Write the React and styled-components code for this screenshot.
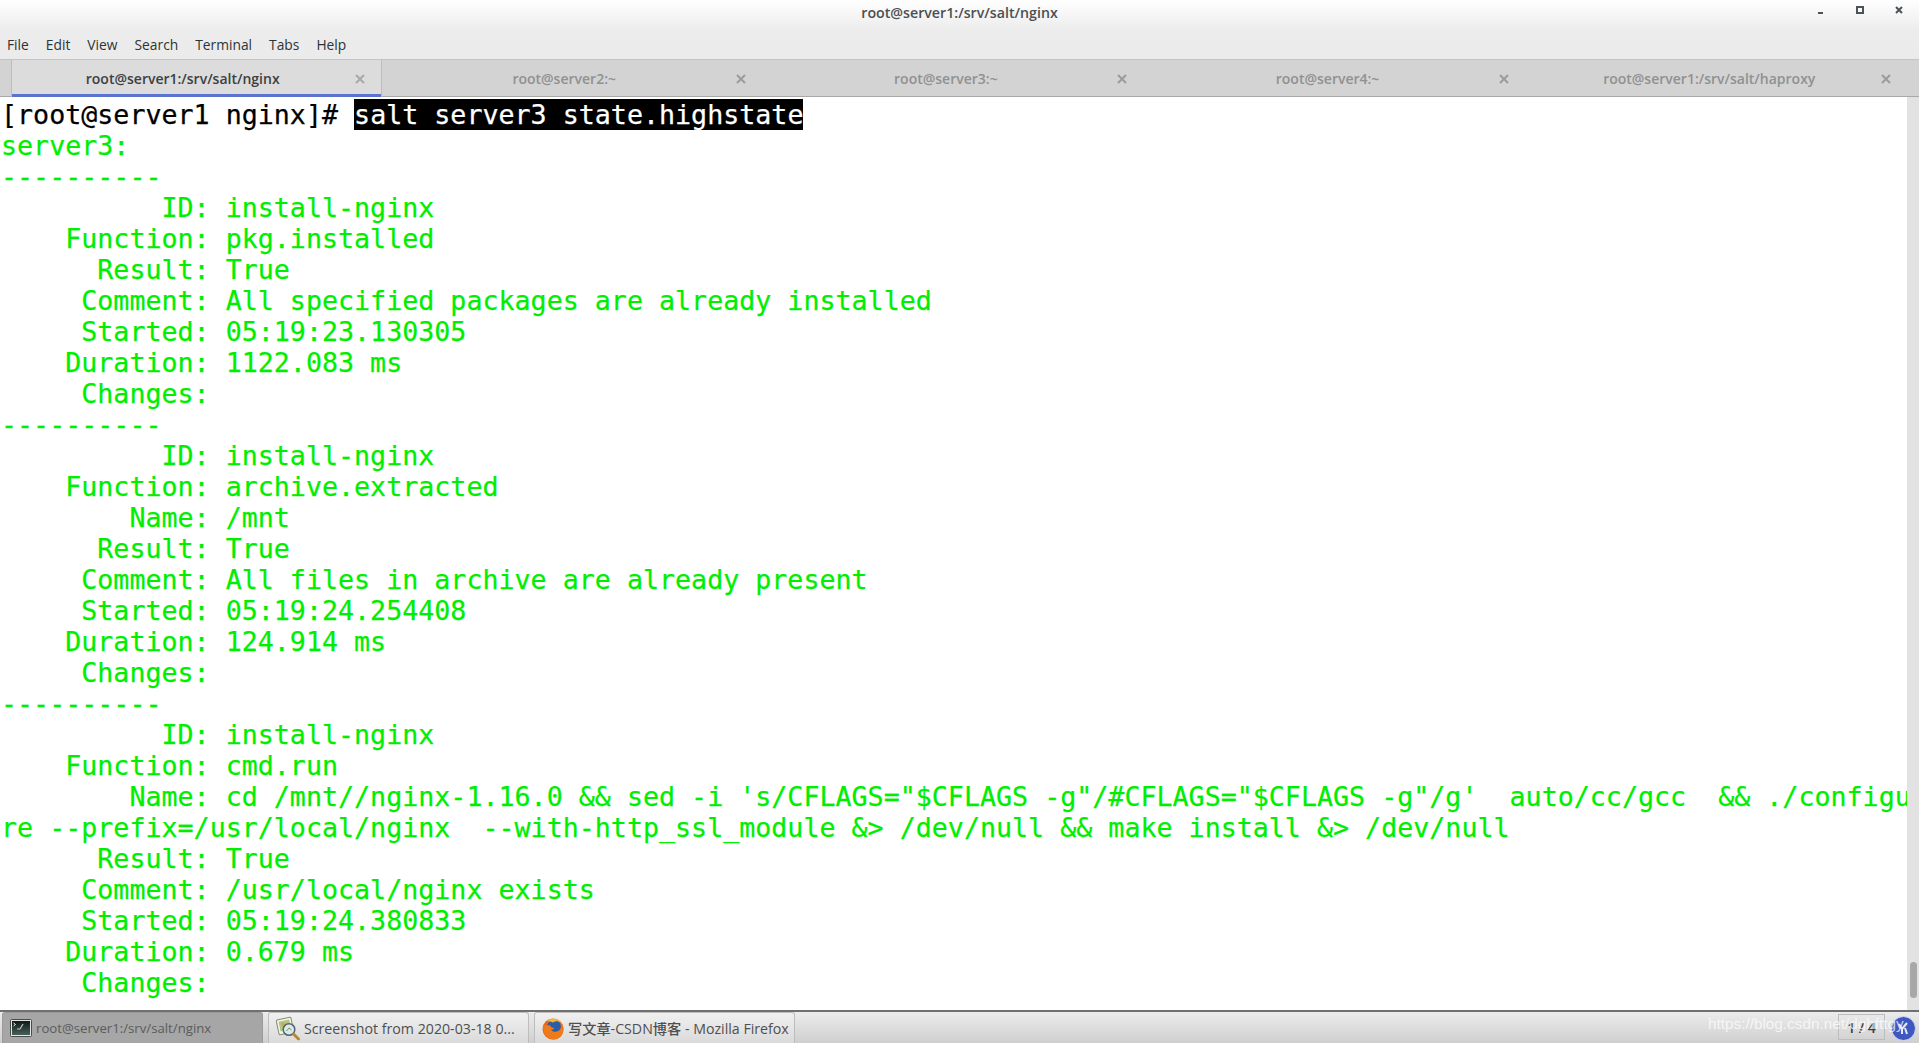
import styled, { createGlobalStyle } from 'styled-components';

const GlobalStyle = createGlobalStyle`
  html, body {
    margin: 0;
    padding: 0;
    background: #fff;
    overflow: hidden;
  }
`;

const Screen = styled.div`
  width: 1919px;
  height: 1043px;
  display: flex;
  flex-direction: column;
  overflow: hidden;
  font-family: 'Open Sans', sans-serif;
`;

const Header = styled.div`
  height: 60px;
  display: flex;
  flex-direction: column;
  background: linear-gradient(#ffffff 0, #ececec 30px, #ebebeb 100%);
  border-bottom: 1px solid #c4c4c4;
  box-sizing: border-box;
`;

const TitleBar = styled.div`
  height: 24px;
  position: relative;
  display: flex;
  align-items: center;
  justify-content: center;
  font-size: 14.2px;
  font-weight: 600;
  color: #4a4f51;
`;

const WindowButtons = styled.div`
  position: absolute;
  right: 16px;
  top: 6px;
  display: flex;
  gap: 31px;
  align-items: flex-start;
`;

const MenuBar = styled.div`
  display: flex;
  gap: 17px;
  padding: 11px 0 0 7px;
  font-size: 13.8px;
  line-height: 20px;
  color: #2e3436;
`;

const TabBar = styled.div`
  height: 37px;
  display: flex;
  background: #d3d3d3;
  border-bottom: 1px solid #a8a8a8;
  box-sizing: border-box;
`;

const Tab = styled.div`
  width: ${(p) => (p.$active ? '371px' : '381.7px')};
  margin-left: ${(p) => (p.$active ? '10.7px' : '0')};
  display: flex;
  align-items: center;
  box-sizing: border-box;
  font-size: 14px;
  font-weight: 600;
  color: ${(p) => (p.$active ? '#3b4042' : '#8f9192')};
  background: ${(p) => (p.$active ? '#dcdcdc' : 'transparent')};
  border-left: ${(p) => (p.$active ? '1px solid #bdbdbd' : 'none')};
  border-right: ${(p) => (p.$active ? '1px solid #bdbdbd' : 'none')};
  box-shadow: ${(p) => (p.$active ? 'inset 0 -3px 0 #5a73d0' : 'none')};
  height: 37px;
`;

const TabLabel = styled.div`
  width: ${(p) => (p.$active ? '342px' : '353px')};
  padding-left: ${(p) => (p.$active ? '0' : '12px')};
  box-sizing: border-box;
  text-align: center;
  white-space: nowrap;
`;

const TabClose = styled.svg`
  width: 10px;
  height: 10px;
  margin-left: 1px;
  flex: none;
`;

const Body = styled.div`
  height: 913px;
  display: flex;
  background: #fff;
`;

const Terminal = styled.pre`
  flex: 1;
  min-width: 0;
  margin: 0;
  padding: 2px 0 0 1px;
  font-family: 'DejaVu Sans Mono', monospace;
  font-size: 26.67px;
  line-height: 31px;
  color: #00ee00;
  -webkit-text-stroke: 0.25px currentColor;
`;

const Prompt = styled.span`
  color: #000;
`;

const Selected = styled.span`
  color: #fff;
  background: #000;
`;

const Scrollbar = styled.div`
  width: 12px;
  background: #e2e2e2;
  position: relative;
`;

const Thumb = styled.div`
  position: absolute;
  left: 3px;
  right: 2px;
  bottom: 12px;
  height: 36px;
  border-radius: 4px;
  background: #a8a8a8;
`;

const Taskbar = styled.div`
  height: 33px;
  display: flex;
  align-items: flex-end;
  box-sizing: border-box;
  border-top: 2px solid #707070;
  background: linear-gradient(#ececec, #cfcfcf);
  padding-left: 2px;
  gap: 5px;
  position: relative;
`;

const TaskButton = styled.div`
  width: 261px;
  height: 31px;
  box-sizing: border-box;
  display: flex;
  align-items: center;
  gap: 4px;
  padding-left: 7px;
  font-size: ${(p) => p.$size}px;
  font-weight: 500;
  white-space: nowrap;
  color: ${(p) => (p.$active ? '#5b5b5b' : '#4f4f4f')};
  background: ${(p) => (p.$active ? '#a6a6a6' : 'linear-gradient(#f0f0f0, #dadada)')};
  border: 1px solid ${(p) => (p.$active ? '#9a9a9a' : '#bdbdbd')};
  border-bottom: none;
  border-radius: 3px 3px 0 0;
`;

const CjkText = styled.span`
  font-family: 'Open Sans', 'Noto Sans CJK SC', sans-serif;
`;

const Pager = styled.div`
  position: absolute;
  left: 1838px;
  top: 2px;
  width: 47px;
  height: 26px;
  box-sizing: border-box;
  border: 1px solid #bdbdbd;
  display: flex;
  align-items: center;
  justify-content: center;
  font-size: 14px;
  font-weight: 600;
  color: #3c3c3c;
`;

const Avatar = styled.svg`
  position: absolute;
  left: 1891px;
  top: 4px;
  width: 25px;
  height: 25px;
`;

const Watermark = styled.div`
  position: absolute;
  left: 1708px;
  top: 3px;
  font-family: 'Liberation Sans', sans-serif;
  font-size: 15.3px;
  color: rgba(255, 255, 255, 0.72);
  white-space: nowrap;
`;

const menus = ['File', 'Edit', 'View', 'Search', 'Terminal', 'Tabs', 'Help'];
const tabs = [
  'root@server1:/srv/salt/nginx',
  'root@server2:~',
  'root@server3:~',
  'root@server4:~',
  'root@server1:/srv/salt/haproxy',
];

const output = `server3:
----------
          ID: install-nginx
    Function: pkg.installed
      Result: True
     Comment: All specified packages are already installed
     Started: 05:19:23.130305
    Duration: 1122.083 ms
     Changes:   
----------
          ID: install-nginx
    Function: archive.extracted
        Name: /mnt
      Result: True
     Comment: All files in archive are already present
     Started: 05:19:24.254408
    Duration: 124.914 ms
     Changes:   
----------
          ID: install-nginx
    Function: cmd.run
        Name: cd /mnt//nginx-1.16.0 && sed -i 's/CFLAGS="$CFLAGS -g"/#CFLAGS="$CFLAGS -g"/g'  auto/cc/gcc  && ./configu
re --prefix=/usr/local/nginx  --with-http_ssl_module &> /dev/null && make install &> /dev/null
      Result: True
     Comment: /usr/local/nginx exists
     Started: 05:19:24.380833
    Duration: 0.679 ms
     Changes:   `;

const CloseGlyph = ({ color }) => (
  <TabClose viewBox="0 0 10 10">
    <path d="M1 1l8 8M9 1l-8 8" stroke={color} strokeWidth="2" />
  </TabClose>
);

const TerminalIcon = () => (
  <svg width="22" height="18" viewBox="0 0 22 18">
    <defs>
      <linearGradient id="termScreen" x1="0" y1="0" x2="0" y2="1">
        <stop offset="0" stopColor="#0e1a18" />
        <stop offset="1" stopColor="#46605a" />
      </linearGradient>
    </defs>
    <rect x="0.5" y="0.5" width="21" height="17" rx="1" fill="#e4e4e4" stroke="#4a4a4a" />
    <rect x="2" y="2" width="18" height="14" fill="url(#termScreen)" />
    <path d="M3.500 4l2 1.500-2 1.500" stroke="#eee" fill="none" />
    <path d="M7 10h3l3-5" stroke="#c8c8c8" strokeWidth="1.200" fill="none" />
  </svg>
);

const ViewerIcon = () => (
  <svg width="24" height="25" viewBox="0 0 24 25">
    <rect x="1.500" y="2.500" width="15" height="15" rx="1" fill="#f5f5e8" stroke="#8a8a7a" transform="rotate(-12 9 10)" />
    <rect x="3.500" y="4.500" width="11" height="10" fill="#a9c98a" transform="rotate(-12 9 10)" />
    <circle cx="7" cy="8" r="2" fill="#e8a23c" />
    <circle cx="13" cy="13.500" r="5.800" fill="#dbe9ee" stroke="#55666f" strokeWidth="1.500" />
    <path d="M10.500 15l2.500-3 2.500 2" stroke="#6f9a4f" fill="none" />
    <path d="M17.500 18l5 5" stroke="#b8842e" strokeWidth="2.800" strokeLinecap="round" />
  </svg>
);

const FirefoxIcon = () => (
  <svg width="22" height="23" viewBox="0 0 22 23">
    <circle cx="11" cy="12" r="10.500" fill="#e8661c" />
    <circle cx="12" cy="10" r="7" fill="#2a5fa8" />
    <path d="M1.500 8C0 16 6 22.500 12 22.500c5.500 0 9.500-4.500 9.500-10 0-2.300-.7-4.500-2-6.500 .5 3.500-.5 6.500-3.300 8-3 1.600-6 .6-7-1.500 2 .4 3-.7 3-1.500-2 0-4-.7-4-2.700-1.500 0-4-.3-6.700.2z" fill="#ee7a1a" />
    <path d="M5 3.500C9 .5 16 1 19.500 6 16.500 4 13.500 3.800 11 5.500 9.500 4.800 7 4.500 5 3.500z" fill="#f7b733" />
  </svg>
);

export default function App() {
  return (
    <Screen>
      <GlobalStyle />
      <Header>
        <TitleBar>
          root@server1:/srv/salt/nginx
          <WindowButtons>
            <svg width="8" height="10" viewBox="0 0 8 10">
              <rect x="1" y="6" width="5" height="2" fill="#4a5458" />
            </svg>
            <svg width="8" height="10" viewBox="0 0 8 10">
              <rect x="1" y="1" width="6" height="6" fill="none" stroke="#4a5458" strokeWidth="2" />
            </svg>
            <svg width="8" height="10" viewBox="0 0 8 10">
              <path d="M1 1l6 6M7 1l-6 6" stroke="#4a5458" strokeWidth="2" />
            </svg>
          </WindowButtons>
        </TitleBar>
        <MenuBar>
          {menus.map((m) => (
            <span key={m}>{m}</span>
          ))}
        </MenuBar>
      </Header>
      <TabBar>
        {tabs.map((t, i) => (
          <Tab key={t} $active={i === 0}>
            <TabLabel $active={i === 0}>{t}</TabLabel>
            <CloseGlyph color={i === 0 ? '#a8a8a8' : '#9b9b9b'} />
          </Tab>
        ))}
      </TabBar>
      <Body>
        <Terminal>
          <Prompt>[root@server1 nginx]# </Prompt>
          <Selected>salt server3 state.highstate</Selected>
          {'\n'}
          {output}
        </Terminal>
        <Scrollbar>
          <Thumb />
        </Scrollbar>
      </Body>
      <Taskbar>
        <TaskButton $active $size={13.2}>
          <TerminalIcon />
          root@server1:/srv/salt/nginx
        </TaskButton>
        <TaskButton $size={14.2}>
          <ViewerIcon />
          Screenshot from 2020-03-18 0...
        </TaskButton>
        <TaskButton $size={14.2}>
          <FirefoxIcon />
          <CjkText>写文章-CSDN博客 - Mozilla Firefox</CjkText>
        </TaskButton>
        <Pager>1 / 4</Pager>
        <Avatar viewBox="0 0 25 25">
          <circle cx="12.500" cy="12.500" r="12" fill="#3f58c0" stroke="#d5dbf0" />
          <path d="M8 8l3 5 5-6M11 13v5M14 12l2 6" stroke="#e6ebfa" strokeWidth="2" fill="none" />
        </Avatar>
        <Watermark>https://blog.csdn.net/dghfttgy</Watermark>
      </Taskbar>
    </Screen>
  );
}
